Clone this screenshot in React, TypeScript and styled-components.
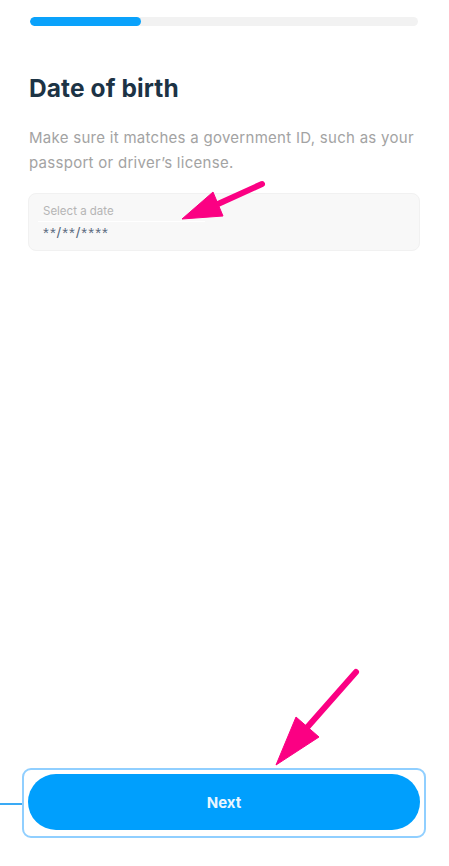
import React from "react";
import { styled, createGlobalStyle } from "styled-components";

const GlobalStyle = createGlobalStyle`
  html, body {
    margin: 0;
    padding: 0;
    background: #ffffff;
  }
  body {
    font-family: "Inter", "Noto Sans", sans-serif;
    -webkit-font-smoothing: antialiased;
  }
`;

const Page = styled.div`
  position: relative;
  width: 449px;
  height: 866px;
  display: flex;
  flex-direction: column;
  box-sizing: border-box;
  padding: 17px 0 28px;
  overflow: hidden;
`;

const Content = styled.div`
  flex: 1;
  padding: 0 29px;
  display: flex;
  flex-direction: column;
`;

const Progress = styled.div`
  height: 9px;
  margin: 0 1px;
  width: 388px;
  border-radius: 5px;
  background: #f2f2f2;
  overflow: hidden;
`;

const ProgressFill = styled.div<{ $pct: number }>`
  height: 100%;
  width: ${({ $pct }) => $pct}%;
  background: #0aa2fb;
  border-radius: 5px;
`;

const Title = styled.h1`
  margin: 47px 0 0;
  font-size: 24.5px;
  line-height: 30px;
  font-weight: 700;
  color: #1c3345;
  letter-spacing: 0.1px;
`;

const Hint = styled.p`
  margin: 22px 0 0;
  font-size: 15px;
  line-height: 25px;
  color: #a3a3a3;
  letter-spacing: 0.28px;
`;

const Field = styled.div`
  margin-top: 18px;
  height: 58px;
  width: 392px;
  box-sizing: border-box;
  margin-left: -1px;
  background: #f8f8f8;
  border: 1px solid #f1f1f1;
  border-radius: 8px;
  padding: 9px 0 0 9px;
`;

const FieldLabel = styled.div`
  font-size: 11.5px;
  line-height: 14px;
  color: #b5b5b5;
  padding: 1px 0 3px 5px;
  width: 162px;
  border-bottom: 1px solid #ffffff;
`;

const FieldValue = styled.div`
  font-family: "Liberation Sans", sans-serif;
  font-size: 15px;
  line-height: 18px;
  color: #5b6b80;
  padding: 2px 0 0 5px;
  letter-spacing: 1.1px;
`;

const Footer = styled.div`
  position: relative;
  padding: 0 23px 0 22px;
`;

const Connector = styled.div`
  position: absolute;
  left: 0;
  top: 50%;
  width: 22px;
  height: 1.5px;
  background: #3aaaf5;
`;

const Outline = styled.div`
  border: 2px solid #90cfff;
  border-radius: 9px;
  padding: 4px 4px 6px 4px;
`;

const NextButton = styled.button`
  width: 100%;
  height: 56px;
  border: none;
  border-radius: 28px;
  background: #009ffd;
  color: #e9f6ff;
  font-family: "Inter", sans-serif;
  font-size: 15px;
  font-weight: 700;
  cursor: pointer;
`;

const Annotations = styled.svg`
  position: absolute;
  left: 0;
  top: 0;
  pointer-events: none;
`;

function Arrow({
  tail,
  tip,
  wingA,
  wingB,
}: {
  tail: [number, number];
  tip: [number, number];
  wingA: [number, number];
  wingB: [number, number];
}) {
  const mid: [number, number] = [(wingA[0] + wingB[0]) / 2, (wingA[1] + wingB[1]) / 2];
  return (
    <g fill="#fb0083" stroke="#fb0083">
      <line x1={tail[0]} y1={tail[1]} x2={mid[0]} y2={mid[1]} strokeWidth={6} strokeLinecap="round" />
      <polygon points={`${tip[0]},${tip[1]} ${wingA[0]},${wingA[1]} ${wingB[0]},${wingB[1]}`} strokeWidth={1} strokeLinejoin="round" />
    </g>
  );
}

export default function App() {
  return (
    <>
      <GlobalStyle />
      <Page>
        <Content>
          <Progress>
            <ProgressFill $pct={28.6} />
          </Progress>
          <Title>Date of birth</Title>
          <Hint>
            Make sure it matches a government ID, such as your passport or driver’s license.
          </Hint>
          <Field>
            <FieldLabel>Select a date</FieldLabel>
            <FieldValue>**/**/****</FieldValue>
          </Field>
        </Content>
        <Footer>
          <Connector />
          <Outline>
            <NextButton>Next</NextButton>
          </Outline>
        </Footer>
        <Annotations width={449} height={866} viewBox="0 0 449 866">
          <Arrow tail={[262, 184]} tip={[182, 219]} wingA={[213, 192]} wingB={[223, 216]} />
          <Arrow tail={[356, 672]} tip={[276, 765]} wingA={[296, 717]} wingB={[319, 737]} />
        </Annotations>
      </Page>
    </>
  );
}
